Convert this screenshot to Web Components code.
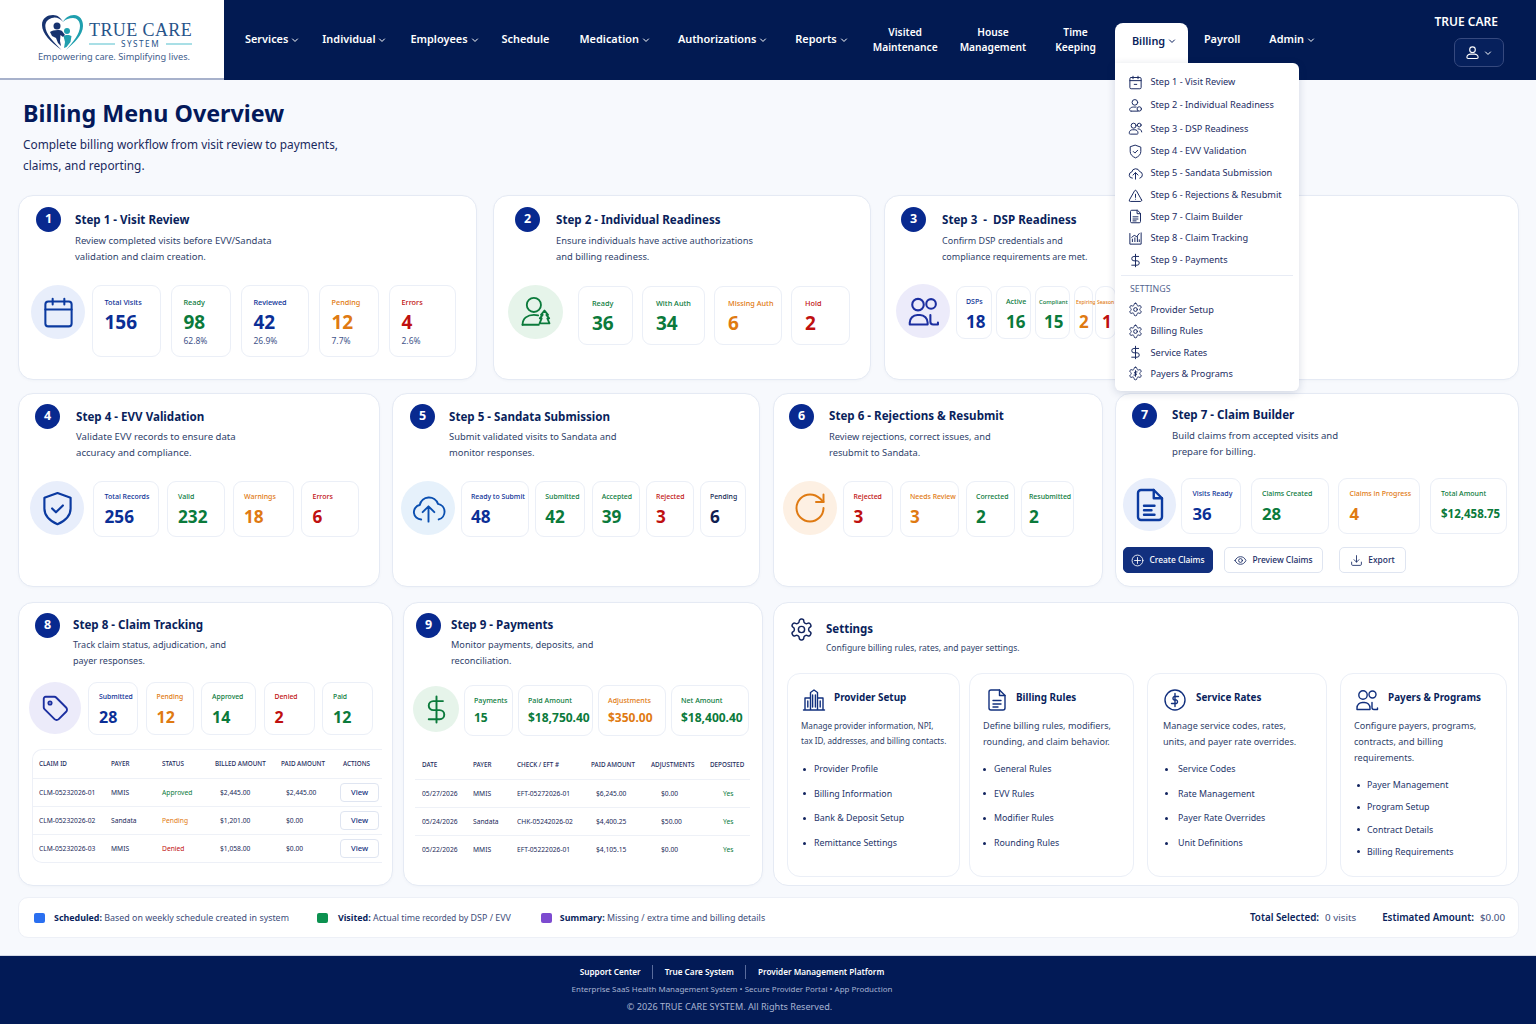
<!DOCTYPE html>
<html lang="en">
<head>
<meta charset="utf-8">
<title>Billing Menu Overview</title>
<style>
  html, body { margin: 0; padding: 0; }
  body { width: 1536px; height: 1024px; overflow: hidden; background: #f7f9fd; font-family: "Noto Sans", "Open Sans", sans-serif; color: #0a1f5c; }
</style>
</head>
<body>
<tc-header></tc-header>
<tc-main>
  <tc-page-title heading="Billing Menu Overview" text="Complete billing workflow from visit review to payments, claims, and reporting."></tc-page-title>

  <tc-row style="margin-top:19px;height:185px">
    <tc-step-card num="1" heading="Step 1 - Visit Review" desc="Review completed visits before EVV/Sandata|validation and claim creation." offset="18" title-gap="14" row-left="13" row-top="20" style="width:459px;--desc-size:9.5px;--tile-pt:11px;--tile-pl:11.5px;--row-gap:10px;--tile-label:7.3px">
      <tc-circle icon="calendar" bg="#e8eefb" color="#0b3aa0" d="54" size="35" sw="1.4" style="margin-right:-3px"></tc-circle>
      <tc-stat label="Total Visits" value="156" tone="blue" w="69" h="72"></tc-stat>
      <tc-stat label="Ready" value="98" sub="62.8%" tone="green" w="60" h="72"></tc-stat>
      <tc-stat label="Reviewed" value="42" sub="26.9%" tone="blue" w="68" h="72"></tc-stat>
      <tc-stat label="Pending" value="12" sub="7.7%" tone="orange" w="60" h="72"></tc-stat>
      <tc-stat label="Errors" value="4" sub="2.6%" tone="red" w="67" h="72"></tc-stat>
    </tc-step-card>
    <tc-step-card num="2" heading="Step 2 - Individual Readiness" desc="Ensure individuals have active authorizations|and billing readiness." offset="22" title-gap="16" row-left="15" row-top="20" style="width:378px;margin-left:16px;--desc-size:9.35px;--tile-pt:11px;--tile-pl:13px;--row-gap:9px;--tile-label:7.3px">
      <tc-circle icon="user-tree" bg="#e6f4ea" color="#0b7a3b" d="55" size="34" sw="1.3" style="margin-right:6px;height:54px"></tc-circle>
      <tc-stat label="Ready" value="36" tone="green" w="55" h="59" style="margin-top:1px"></tc-stat>
      <tc-stat label="With Auth" value="34" tone="green" w="63" h="59" style="margin-top:1px"></tc-stat>
      <tc-stat label="Missing Auth" value="6" tone="orange" w="68" h="59" style="margin-top:1px"></tc-stat>
      <tc-stat label="Hold" value="2" tone="red" w="59" h="59" style="margin-top:1px"></tc-stat>
    </tc-step-card>
    <tc-step-card num="3" heading="Step 3 &nbsp;- &nbsp;DSP Readiness" desc="Confirm DSP credentials and|compliance requirements are met." offset="17" title-gap="16" row-left="12" row-top="19" style="width:635px;margin-left:13px;--desc-size:9px;--tile-pt:10px;--tile-pl:9px;--row-gap:4px;--tile-label:7px;--tile-val:17px">
      <tc-circle icon="users-hook" bg="#ecebfa" color="#1c2fa0" d="54" size="33" sw="1.5" style="margin-right:2px"></tc-circle>
      <tc-stat label="DSPs" value="18" tone="blue" w="36" h="53" style="margin-top:2px"></tc-stat>
      <tc-stat label="Active" value="16" tone="green" w="35" h="53" style="margin-top:2px"></tc-stat>
      <tc-stat label="Compliant" value="15" tone="green" w="35" h="53" style="margin-top:2px;--tile-label:5.8px;--tile-pl:3px;--val-pl:5px"></tc-stat>
      <tc-stat label="Expiring" value="2" tone="orange" w="19" h="53" style="margin-top:2px;--tile-label:5px;--tile-pl:1px;--val-pl:3px"></tc-stat>
      <tc-stat label="Season" value="1" tone="red" label-tone="orange" w="21" h="53" style="margin-top:2px;margin-left:-2px;--tile-label:5px;--tile-pl:1px;--val-pl:5px"></tc-stat>
    </tc-step-card>
  </tc-row>

  <tc-row style="margin-top:13px;height:194px">
    <tc-step-card num="4" heading="Step 4 - EVV Validation" desc="Validate EVV records to ensure data|accuracy and compliance." offset="17" title-gap="16" row-left="12" row-top="19" head-top="10" style="width:362px;--h-mb:4px;--desc-size:9.6px;--tile-pt:10px;--tile-pl:10.5px;--row-gap:7.5px;--tile-label:7px;--tile-val:17.2px">
      <tc-circle icon="shield-check" bg="#e8eefb" color="#0b3aa0" d="54" size="37" sw="1.4" style="margin-right:1.5px"></tc-circle>
      <tc-stat label="Total Records" value="256" tone="blue" w="66" h="56"></tc-stat>
      <tc-stat label="Valid" value="232" tone="green" w="58.5" h="56"></tc-stat>
      <tc-stat label="Warnings" value="18" tone="orange" w="61" h="56"></tc-stat>
      <tc-stat label="Errors" value="6" tone="red" w="57.5" h="56"></tc-stat>
    </tc-step-card>
    <tc-step-card num="5" heading="Step 5 - Sandata Submission" desc="Submit validated visits to Sandata and|monitor responses." offset="18" title-gap="14" row-left="9" row-top="19" head-top="10" style="width:368px;margin-left:12px;--h-mb:4px;--desc-size:9.4px;--tile-pt:10px;--tile-pl:9px;--row-gap:6.4px;--tile-label:6.9px;--tile-val:17.2px">
      <tc-circle icon="cloud-up" bg="#e6f1fb" color="#0b4fb0" d="54" size="35" sw="1.3" style="margin-right:-.5px"></tc-circle>
      <tc-stat label="Ready to Submit" value="48" tone="blue" w="68" h="56"></tc-stat>
      <tc-stat label="Submitted" value="42" tone="green" w="50" h="56"></tc-stat>
      <tc-stat label="Accepted" value="39" tone="green" w="48" h="56"></tc-stat>
      <tc-stat label="Rejected" value="3" tone="red" w="47.5" h="56"></tc-stat>
      <tc-stat label="Pending" value="6" tone="navy" w="46.5" h="56"></tc-stat>
    </tc-step-card>
    <tc-step-card num="6" heading="Step 6 - Rejections &amp; Resubmit" desc="Review rejections, correct issues, and|resubmit to Sandata." offset="16" title-gap="15" row-left="10" row-top="19" head-top="10" style="width:330px;margin-left:13px;--h-pt:4px;--desc-size:9.3px;--tile-pt:10px;--tile-pl:9.5px;--row-gap:6.5px;--tile-label:6.9px;--tile-val:17.2px">
      <tc-circle icon="rotate" bg="#fdf0e3" color="#df7a12" d="54" size="36" sw="1.3" style="margin-right:-.5px"></tc-circle>
      <tc-stat label="Rejected" value="3" tone="red" w="50" h="56"></tc-stat>
      <tc-stat label="Needs Review" value="3" tone="orange" w="59.5" h="56"></tc-stat>
      <tc-stat label="Corrected" value="2" tone="green" w="49" h="56"></tc-stat>
      <tc-stat label="Resubmitted" value="2" tone="green" w="52.5" h="56" style="--tile-pl:7px"></tc-stat>
    </tc-step-card>
    <tc-step-card num="7" heading="Step 7 - Claim Builder" desc="Build claims from accepted visits and|prepare for billing." offset="17" title-gap="15" row-left="8" row-top="17" head-top="9" style="width:404px;margin-left:12px;--h-pt:4px;--desc-size:9.6px;--tile-pt:10px;--tile-pl:10.5px;--row-gap:9.5px;--tile-label:7px;--tile-val:16.8px">
      <tc-circle icon="file-doc" bg="#e8eefb" color="#0b3aa0" d="53" size="36" sw="1.6" style="margin-right:-4.5px"></tc-circle>
      <tc-stat label="Visits Ready" value="36" tone="blue" w="60" h="56"></tc-stat>
      <tc-stat label="Claims Created" value="28" tone="green" w="78" h="56"></tc-stat>
      <tc-stat label="Claims in Progress" value="4" tone="orange" w="82" h="56"></tc-stat>
      <tc-stat label="Total Amount" value="$12,458.75" tone="green" label-tone="green" w="77" h="56" style="--tile-val:11.5px"></tc-stat>
      <tc-actions slot="below"></tc-actions>
    </tc-step-card>
  </tc-row>

  <tc-row style="margin-top:15px;height:284px">
    <tc-step-card num="8" heading="Step 8 - Claim Tracking" desc="Track claim status, adjudication, and|payer responses." offset="17" title-gap="13" row-left="11" row-top="11" head-top="10" style="width:375px;--h-pt:4px;--h-mb:4px;--desc-size:9px;--tile-pt:9px;--tile-pl:10px;--row-gap:7.5px;--tile-label:6.8px;--tile-val:16px">
      <tc-circle icon="tag" bg="#ecebfa" color="#1c2fa0" d="52" size="30" sw="1.5" style="margin-right:-.5px"></tc-circle>
      <tc-stat label="Submitted" value="28" tone="blue" w="50" h="53"></tc-stat>
      <tc-stat label="Pending" value="12" tone="orange" w="48" h="53"></tc-stat>
      <tc-stat label="Approved" value="14" tone="green" w="55" h="53"></tc-stat>
      <tc-stat label="Denied" value="2" tone="red" w="51" h="53"></tc-stat>
      <tc-stat label="Paid" value="12" tone="green" w="51" h="53"></tc-stat>
      <tc-table slot="below" kind="claims"></tc-table>
    </tc-step-card>
    <tc-step-card num="9" heading="Step 9 - Payments" desc="Monitor payments, deposits, and|reconciliation." offset="13" title-gap="10" row-left="10" row-top="14" head-top="10" style="width:360px;margin-left:10px;--h-pt:4px;--h-mb:4px;--tile-pt:9px;--tile-pl:9px;--row-gap:5px;--tile-label:7.1px;--tile-val:12px;--val-mt:1px">
      <tc-circle icon="dollar" bg="#e6f4ea" color="#0b7a3b" d="46" size="31" sw="1.5" style="margin:1px 0 0"></tc-circle>
      <tc-stat label="Payments" value="15" tone="green" w="49" h="51"></tc-stat>
      <tc-stat label="Paid Amount" value="$18,750.40" tone="green" w="75" h="51"></tc-stat>
      <tc-stat label="Adjustments" value="$350.00" tone="orange" w="68" h="51"></tc-stat>
      <tc-stat label="Net Amount" value="$18,400.40" tone="green" w="78" h="51"></tc-stat>
      <tc-table slot="below" kind="payments"></tc-table>
    </tc-step-card>
    <tc-settings-panel style="width:746px;margin-left:10px">
      <tc-setting-card icon="building" heading="Provider Setup" icon-left="14" title-left="8" desc-left="13" desc-size="8.1" desc-lh="15" list-top="14" bullet-left="2" text-left="11" items="Provider Profile|Billing Information|Bank &amp; Deposit Setup|Remittance Settings" desc="Manage provider information, NPI,|tax ID, addresses, and billing contacts." style="width:173px"></tc-setting-card>
      <tc-setting-card icon="file-lines" heading="Billing Rules" icon-left="15" title-left="7" desc-left="13" items="General Rules|EVV Rules|Modifier Rules|Rounding Rules" desc="Define billing rules, modifiers,|rounding, and claim behavior." style="width:165px;margin-left:9px"></tc-setting-card>
      <tc-setting-card icon="circle-dollar" heading="Service Rates" icon-left="15" title-left="9" desc-left="15" bullet-left="2" text-left="13" items="Service Codes|Rate Management|Payer Rate Overrides|Unit Definitions" desc="Manage service codes, rates,|units, and payer rate overrides." style="width:180px;margin-left:13px"></tc-setting-card>
      <tc-setting-card icon="users-hook" heading="Payers &amp; Programs" icon-left="14" title-left="9" desc-left="13" bullet-left="3" text-left="10" item-gap="22.3" items="Payer Management|Program Setup|Contract Details|Billing Requirements" desc="Configure payers, programs,|contracts, and billing|requirements." style="width:167px;margin-left:13px"></tc-setting-card>
    </tc-settings-panel>
  </tc-row>

  <tc-legend></tc-legend>
</tc-main>
<tc-footer></tc-footer>

<script>
const GEAR = 'M12.22 2h-.44a2 2 0 0 0-2 2v.18a2 2 0 0 1-1 1.73l-.43.25a2 2 0 0 1-2 0l-.15-.08a2 2 0 0 0-2.73.73l-.22.38a2 2 0 0 0 .73 2.73l.15.1a2 2 0 0 1 1 1.72v.51a2 2 0 0 1-1 1.74l-.15.09a2 2 0 0 0-.73 2.73l.22.38a2 2 0 0 0 2.73.73l.15-.08a2 2 0 0 1 2 0l.43.25a2 2 0 0 1 1 1.73V20a2 2 0 0 0 2 2h.44a2 2 0 0 0 2-2v-.18a2 2 0 0 1 1-1.73l.43-.25a2 2 0 0 1 2 0l.15.08a2 2 0 0 0 2.73-.73l.22-.39a2 2 0 0 0-.73-2.73l-.15-.08a2 2 0 0 1-1-1.74v-.5a2 2 0 0 1 1-1.74l.15-.09a2 2 0 0 0 .73-2.73l-.22-.38a2 2 0 0 0-2.73-.73l-.15.08a2 2 0 0 1-2 0l-.43-.25a2 2 0 0 1-1-1.73V4a2 2 0 0 0-2-2z';

const ICONS = {
  'calendar': '<rect x="3" y="4.5" width="18" height="17" rx="2"/><path d="M16 2.5v4M8 2.5v4M3 10h18"/>',
  'calendar-dash': '<rect x="3" y="4" width="18" height="18" rx="2"/><path d="M16 2v4M8 2v4M3 9h18M10 15h4"/>',
  'user': '<circle cx="12" cy="7.5" r="4.5"/><path d="M5 21.5c-1.2 0-2-.8-2-2 0-3 3-5 6-5h6c3 0 6 2 6 5 0 1.2-.8 2-2 2z"/>',
  'user-mini': '<circle cx="11" cy="7" r="4.5"/><path d="M5 21c-2.5 0-3-2-2-4 1-1.5 3-2.5 5.5-2.5H13"/><path d="M5 21h11"/><circle cx="18" cy="17.5" r="3.5"/>',
  'users': '<circle cx="9" cy="7.5" r="4"/><circle cx="18" cy="6.5" r="3"/><path d="M3 21c-1 0-1-1-1-2 0-3 2.5-5 5-5h4c2.5 0 5 2 5 5 0 1 0 2-1 2z"/><path d="M16 12.5c3 0 6 2 6 5"/>',
  'users-hook': '<circle cx="8" cy="7" r="4.2"/><circle cx="17.5" cy="6.5" r="3.5"/><path d="M2 21.5V20a5.5 5.5 0 0 1 5.5-5.5h2A5.5 5.5 0 0 1 15 20v1.5z"/><path d="M17 14.500v5a2 2 0 0 0 2 2h3.500V20"/>',
  'user-tree': '<circle cx="10.5" cy="7" r="5"/><path d="M2.5 21c0-4.500 3.500-7 8-7 1 0 2 .1 3 .4"/><path d="M2.5 21H14"/><path d="M18 11l2.500 3h-1.200l2 2.500H20l1.500 3.500h-7l1.500-3.500h-1.300l2-2.500h-1.200z"/>',
  'shield-check': '<path d="M12 2l8.500 3v7c0 5-3.500 8-8.500 10.200C7 20 3.500 17 3.500 12V5z"/><path d="M8.500 12l2.500 2.500 4.500-4.500"/>',
  'cloud-up': '<path d="M7 19.500a5 5 0 0 1-1-9.900 6.500 6.500 0 0 1 12.500-.8 5.500 5.500 0 0 1 .5 10.700"/><path d="M12 21V11M8 14.500l4-4 4 4"/>',
  'triangle': '<path d="M21.700 19L13.500 4.500a1.700 1.700 0 0 0-3 0L2.300 19a1.700 1.700 0 0 0 1.500 2.500h16.400a1.700 1.700 0 0 0 1.500-2.500z"/><path d="M12 10v5M12 18h.01"/>',
  'file-lines': '<path d="M14.500 2H6a2 2 0 0 0-2 2v16a2 2 0 0 0 2 2h12a2 2 0 0 0 2-2V7.500z"/><path d="M14.500 2v5.500H20M8 12.500h8M8 16h8M8 19h5"/>',
  'file-doc': '<path d="M14.500 2H6a2 2 0 0 0-2 2v16a2 2 0 0 0 2 2h12a2 2 0 0 0 2-2V7.500z"/><path d="M14.500 2v5.500H20M8 12.500h7M8 15.500h5M8 18.500h7"/>',
  'chart': '<path d="M3 4v17h18V3"/><path d="M7 17v-4M11 17v-6M15 17V9M18 17v-3M6 10l4-3 4 2 4-5"/>',
  'dollar': '<path d="M12 2v20M17 5.500H9.500a3.500 3.500 0 0 0 0 7h5a3.500 3.500 0 0 1 0 7H6"/>',
  'circle-dollar': '<circle cx="12" cy="12" r="10"/><path d="M12 5.500v13M15.500 8.500H11a2 2 0 0 0 0 3.500h2.500a2 2 0 0 1 0 3.500h-5"/>',
  'gear': `<path d="${GEAR}"/><circle cx="12" cy="12" r="3"/>`,
  'gear-dollar': `<path d="${GEAR}"/><path d="M12 7.500v9M14.500 9.500h-3.200a1.300 1.300 0 0 0 0 2.500h1.400a1.300 1.300 0 0 1 0 2.500H9.500"/>`,
  'tag': '<path d="M3 4.500A1.500 1.500 0 0 1 4.500 3h7a2 2 0 0 1 1.400.6l8 8a2.400 2.400 0 0 1 0 3.400L15 20.900a2.400 2.400 0 0 1-3.400 0l-8-8A2 2 0 0 1 3 11.500z"/><circle cx="8" cy="8" r="1.300"/>',
  'rotate': '<path d="M21 12a9 9 0 1 1-9-9c2.500 0 4.900 1 6.700 2.700L21 8"/><path d="M21 3v5h-5"/>',
  'circle-plus': '<circle cx="12" cy="12" r="10"/><path d="M12 6.500v11M6.500 12h11"/>',
  'eye': '<path d="M2 12c2-4.500 5.500-7 10-7s8 2.500 10 7c-2 4.500-5.500 7-10 7s-8-2.500-10-7z"/><circle cx="12" cy="12" r="3.500"/>',
  'download': '<path d="M12 3v12M7.500 10.500L12 15l4.500-4.500M3 15v4a2 2 0 0 0 2 2h14a2 2 0 0 0 2-2v-4"/>',
  'building': '<path d="M1.500 22h21M3 22V10h5.500M21 22V10h-5.500M8.500 22V4.500L12 2l3.500 2.500V22"/><path d="M5.800 13v6M10.600 7v12M13.400 7v12M18.200 13v6"/>',
  'chevron': '<path d="M6 9.500l6 6 6-6"/>'
};

class TcIcon extends HTMLElement {
  constructor() {
    super();
    this.attachShadow({ mode: 'open' });
  }

  connectedCallback() {
    const size = this.getAttribute('size') || 14;
    const color = this.getAttribute('color') || 'currentColor';
    const sw = this.getAttribute('sw') || 1.6;
    this.shadowRoot.innerHTML = `
      <style>
        :host { display: inline-flex; flex: none; line-height: 0; }
      </style>
      <svg width="${size}" height="${size}" viewBox="0 0 24 24" fill="none" stroke="${color}" stroke-width="${sw}" stroke-linecap="round" stroke-linejoin="round">${ICONS[this.getAttribute('name')] || ''}</svg>
    `;
  }
}

class TcLogo extends HTMLElement {
  constructor() {
    super();
    this.attachShadow({ mode: 'open' });
  }

  connectedCallback() {
    this.shadowRoot.innerHTML = `
      <style>
        :host { display: block; width: 224px; height: 80px; flex: none; box-sizing: border-box; background: #fff; padding: 15px 0 0 38px; border-bottom: 2px solid #a7b1cb; }
        .top { display: flex; margin-left: 3px; height: 35px; }
        .names { margin-left: 6px; width: 103px; }
        .name { font: 400 18px/20px "Liberation Serif", serif; color: #27548a; letter-spacing: .4px; white-space: nowrap; margin-top: 5px; }
        .sys { display: flex; align-items: center; gap: 6px; font: 400 8.2px/10px "Noto Sans", sans-serif; letter-spacing: 1.5px; color: #27548a; margin-top: -1px; }
        .sys i { flex: 1; height: 1.5px; background: #a9dfe6; }
        .tag { font: 400 9.2px/12px "Noto Sans", sans-serif; color: #3f5d8c; margin-top: 1px; white-space: nowrap; }
      </style>
      <div class="top">
        <svg width="42" height="35" viewBox="0 0 42 35">
          <path fill="#17336f" d="M20.500 35C10 27 1 19 1 10 1 3 6.500 0 12 0c4.500 0 8 2.800 10 7-2.500-3-6-4.800-9.500-4.300C7.500 3.300 4.300 6.500 4.300 11c0 8 8.500 16 16.200 24z"/>
          <path fill="#1f9fae" d="M22 7c2-4 6-7 11-7 6 0 9 5 9 11 0 9-9 17-17 24 7-8 14-16 14-24 0-5-3-8-7-8s-7 1-10 4z"/>
          <circle cx="16" cy="11" r="3.500" fill="#17336f"/>
          <path fill="#17336f" d="M9 17c2-1.500 9-3 12-1l3 4-2 2-2.500-2-.5 6 1 5-3-3-2-5-4-2z"/>
          <circle cx="26" cy="16" r="3" fill="#1f9fae"/>
          <path fill="#1f9fae" d="M22.500 21c2-1.500 6-1.500 8 0l-1 6-4 5-2.500 1 1-6z"/>
        </svg>
        <div class="names">
          <div class="name">TRUE CARE</div>
          <div class="sys"><i></i>SYSTEM<i></i></div>
        </div>
      </div>
      <div class="tag">Empowering care. Simplifying lives.</div>
    `;
  }
}

class TcNavLink extends HTMLElement {
  constructor() {
    super();
    this.attachShadow({ mode: 'open' });
  }

  connectedCallback() {
    const parts = this.getAttribute('label').split('|');
    const chevron = this.hasAttribute('menu') ? '<tc-icon name="chevron" size="10" sw="2.4"></tc-icon>' : '';
    this.shadowRoot.innerHTML = `
      <style>
        :host { display: flex; align-items: center; gap: 2px; font: 600 ${parts.length > 1 ? 10.2 : 10.9}px/14.5px "Noto Sans", sans-serif; color: #fff; text-align: center; white-space: nowrap; }
      </style>
      <span>${parts.join('<br>')}</span>${chevron}
    `;
  }
}

class TcBillingMenu extends HTMLElement {
  constructor() {
    super();
    this.attachShadow({ mode: 'open' });
  }

  connectedCallback() {
    const steps = [
      ['calendar-dash', 'Step 1 - Visit Review', 23], ['user-mini', 'Step 2 - Individual Readiness', 23.5],
      ['users', 'Step 3 - DSP Readiness', 23], ['shield-check', 'Step 4 - EVV Validation', 22],
      ['cloud-up', 'Step 5 - Sandata Submission', 22], ['triangle', 'Step 6 - Rejections &amp; Resubmit', 22],
      ['file-lines', 'Step 7 - Claim Builder', 21.5], ['chart', 'Step 8 - Claim Tracking', 21.5], ['dollar', 'Step 9 - Payments', 22]
    ];
    const settings = [
      ['gear', 'Provider Setup'], ['gear', 'Billing Rules'], ['dollar', 'Service Rates'], ['gear-dollar', 'Payers &amp; Programs']
    ];
    const row = (icon, text, h) => `<div class="item" style="height:${h}px"><tc-icon name="${icon}" size="15" sw="1.6"></tc-icon><span>${text}</span></div>`;
    this.shadowRoot.innerHTML = `
      <style>
        :host { display: block; position: absolute; left: 0; top: 40px; width: 184px; height: 328px; box-sizing: border-box; background: #fff; border-radius: 0 6px 6px 6px; box-shadow: 0 2px 8px rgba(20, 40, 90, .16); padding-top: 7.5px; color: #1c2c63; z-index: 20; }
        .item { display: flex; align-items: center; gap: 7.5px; padding-left: 13px; font: 400 9.2px/12px "Noto Sans", sans-serif; white-space: nowrap; }
        hr { border: 0; height: 1px; background: #e8ecf5; margin: 4px 6px 7px; }
        .head { font: 400 8.8px/12px "Noto Sans", sans-serif; color: #55648f; padding-left: 15px; margin-bottom: 4.3px; }
      </style>
      ${steps.map(s => row(s[0], s[1], s[2])).join('')}
      <hr>
      <div class="head">SETTINGS</div>
      <div>${settings.map(s => row(s[0], s[1], 21.3)).join('')}</div>
    `;
  }
}

class TcHeader extends HTMLElement {
  constructor() {
    super();
    this.attachShadow({ mode: 'open' });
  }

  connectedCallback() {
    const links = [
      ['Services', 21, 1], ['Individual', 22, 1], ['Employees', 23, 1], ['Schedule', 22, 0], ['Medication', 30, 1],
      ['Authorizations', 27, 1], ['Reports', 27, 1], ['Visited|Maintenance', 24, 0], ['House|Management', 22, 0], ['Time|Keeping', 29, 0]
    ];
    const after = [['Payroll', 16, 0], ['Admin', 29, 1]];
    const render = l => `<tc-nav-link label="${l[0]}" ${l[2] ? 'menu' : ''} style="margin-left:${l[1]}px"></tc-nav-link>`;
    this.shadowRoot.innerHTML = `
      <style>
        :host { display: flex; position: relative; z-index: 10; height: 80px; background: #021a52; }
        nav { display: flex; align-items: center; height: 79px; }
        .tab { position: relative; align-self: flex-start; margin: 23px 0 0 19px; width: 73px; height: 40px; box-sizing: border-box; background: #fff; border-radius: 8px 8px 0 0; padding: 10px 0 0 17px; }
        .tab-label { display: flex; align-items: center; gap: 2px; font: 600 10.9px/15px "Noto Sans", sans-serif; color: #0a1f5c; }
        .account { margin-left: auto; display: flex; flex-direction: column; align-items: flex-end; padding-right: 32px; }
        .brand { font: 600 12px/16px "Noto Sans", sans-serif; color: #fff; margin: 14px 6px 0 0; white-space: nowrap; }
        .user { display: flex; align-items: center; justify-content: center; gap: 3px; width: 50px; height: 29px; box-sizing: border-box; margin-top: 8px; border: 1px solid #36497e; border-radius: 7px; background: #06205c; color: #fff; }
      </style>
      <tc-logo></tc-logo>
      <nav>
        ${links.map(render).join('')}
        <div class="tab">
          <div class="tab-label">Billing <tc-icon name="chevron" size="10" sw="2.4"></tc-icon></div>
          <tc-billing-menu></tc-billing-menu>
        </div>
        ${after.map(render).join('')}
      </nav>
      <div class="account">
        <div class="brand">TRUE CARE</div>
        <div class="user"><tc-icon name="user" size="15" sw="1.8"></tc-icon><tc-icon name="chevron" size="10" sw="2.4"></tc-icon></div>
      </div>
    `;
  }
}

class TcMain extends HTMLElement {
  constructor() {
    super();
    this.attachShadow({ mode: 'open' });
  }

  connectedCallback() {
    this.shadowRoot.innerHTML = `
      <style>
        :host { display: block; height: 876px; box-sizing: border-box; padding: 18px 17px 0 18px; background: #f7f9fd; }
      </style>
      <slot></slot>
    `;
  }
}

class TcPageTitle extends HTMLElement {
  constructor() {
    super();
    this.attachShadow({ mode: 'open' });
  }

  connectedCallback() {
    this.shadowRoot.innerHTML = `
      <style>
        :host { display: block; padding-left: 5px; }
        h1 { margin: 0; font: 700 23.3px/30px "Noto Sans", sans-serif; color: #04195a; }
        p { margin: 6px 0 0; width: 320px; font: 400 11.85px/21px "Noto Sans", sans-serif; color: #1a2a5e; }
      </style>
      <h1>${this.getAttribute('heading')}</h1>
      <p>${this.getAttribute('text')}</p>
    `;
  }
}

class TcRow extends HTMLElement {
  constructor() {
    super();
    this.attachShadow({ mode: 'open' });
  }

  connectedCallback() {
    this.shadowRoot.innerHTML = `
      <style>
        :host { display: flex; align-items: stretch; }
      </style>
      <slot></slot>
    `;
  }
}

class TcStepCard extends HTMLElement {
  constructor() {
    super();
    this.attachShadow({ mode: 'open' });
  }

  connectedCallback() {
    const offset = this.getAttribute('offset');
    const titleGap = this.getAttribute('title-gap');
    const rowLeft = this.getAttribute('row-left');
    const rowTop = this.getAttribute('row-top');
    const headTop = this.getAttribute('head-top') || 11;
    const lines = this.getAttribute('desc').split('|').map(l => `<div>${l}</div>`).join('');
    this.shadowRoot.innerHTML = `
      <style>
        :host { display: block; flex: none; box-sizing: border-box; background: #fff; border: 1px solid #e5eaf4; border-radius: 15px; box-shadow: 0 1px 3px rgba(30, 50, 100, .03); }
        .head { display: flex; padding: ${headTop}px 0 0 ${offset - 1}px; height: 58px; }
        .badge { width: 25px; height: 25px; flex: none; border-radius: 50%; background: #08298f; color: #fff; display: flex; align-items: center; justify-content: center; font: 700 12.5px/1 "Noto Sans", sans-serif; }
        .text { margin-left: ${titleGap}px; padding-top: var(--h-pt, 5px); }
        h3 { margin: 0 0 var(--h-mb, 5px); font: 700 11.6px/16px "Noto Sans", sans-serif; color: #0a1f5c; white-space: nowrap; }
        .desc { font: 400 var(--desc-size, 9.2px)/16px "Noto Sans", sans-serif; color: #2f3f6b; white-space: nowrap; }
        .row { display: flex; align-items: flex-start; gap: var(--row-gap, 8px); margin: ${rowTop}px 0 0 ${rowLeft - 1}px; }
      </style>
      <div class="head">
        <div class="badge">${this.getAttribute('num')}</div>
        <div class="text">
          <h3>${this.getAttribute('heading')}</h3>
          <div class="desc">${lines}</div>
        </div>
      </div>
      <div class="row"><slot></slot></div>
      <slot name="below"></slot>
    `;
  }
}

class TcCircle extends HTMLElement {
  constructor() {
    super();
    this.attachShadow({ mode: 'open' });
  }

  connectedCallback() {
    const d = this.getAttribute('d');
    this.shadowRoot.innerHTML = `
      <style>
        :host { display: flex; flex: none; align-items: center; justify-content: center; width: ${d}px; height: ${d}px; border-radius: 50%; background: ${this.getAttribute('bg')}; }
      </style>
      <tc-icon name="${this.getAttribute('icon')}" size="${this.getAttribute('size')}" color="${this.getAttribute('color')}" sw="${this.getAttribute('sw')}"></tc-icon>
    `;
  }
}

const TONES = { blue: '#0b2f96', green: '#0b7a3b', orange: '#df7a12', red: '#bf1010', navy: '#111f52' };

class TcStat extends HTMLElement {
  constructor() {
    super();
    this.attachShadow({ mode: 'open' });
  }

  connectedCallback() {
    const tone = TONES[this.getAttribute('tone')];
    const labelTone = TONES[this.getAttribute('label-tone')] || tone;
    const sub = this.getAttribute('sub');
    this.shadowRoot.innerHTML = `
      <style>
        :host { display: block; flex: none; box-sizing: border-box; width: ${this.getAttribute('w')}px; height: ${this.getAttribute('h')}px; padding: var(--tile-pt, 12px) 0 0 var(--tile-pl, 10px); background: #fff; border: 1px solid #ebeff7; border-radius: 9px; }
        .label { font: 500 var(--tile-label, 7.8px)/10px "Noto Sans", sans-serif; color: ${labelTone}; white-space: nowrap; }
        .value { font: 700 var(--tile-val, 19px)/24px "Noto Sans", sans-serif; color: ${tone}; margin-top: var(--val-mt, 3px); padding-left: var(--val-pl, 0); white-space: nowrap; }
        .sub { font: 400 8.5px/12px "Noto Sans", sans-serif; color: #43548a; margin-top: 1px; }
      </style>
      <div class="label">${this.getAttribute('label')}</div>
      <div class="value">${this.getAttribute('value')}</div>
      ${sub ? `<div class="sub">${sub}</div>` : ''}
    `;
  }
}

class TcActions extends HTMLElement {
  constructor() {
    super();
    this.attachShadow({ mode: 'open' });
  }

  connectedCallback() {
    this.shadowRoot.innerHTML = `
      <style>
        :host { display: flex; margin: 13px 0 0 7px; }
        .btn { display: flex; align-items: center; justify-content: center; gap: 5px; box-sizing: border-box; height: 26px; border: 1px solid #dfe5f1; border-radius: 5px; background: #fff; color: #1a2c66; font: 500 8.4px/1 "Noto Sans", sans-serif; white-space: nowrap; }
        .primary { background: #12307e; border-color: #12307e; color: #fff; }
      </style>
      <div class="btn primary" style="width:90px"><tc-icon name="circle-plus" size="13" sw="1.6"></tc-icon>Create Claims</div>
      <div class="btn" style="width:99px;margin-left:11px"><tc-icon name="eye" size="13" sw="1.6"></tc-icon>Preview Claims</div>
      <div class="btn" style="width:67px;margin-left:16px"><tc-icon name="download" size="13" sw="1.6"></tc-icon>Export</div>
    `;
  }
}

const TABLES = {
  claims: {
    columns: '72px 51px 53px 66px 62px 39px',
    margin: '14px 0 0 13px',
    head: ['CLAIM ID', 'PAYER', 'STATUS', 'BILLED AMOUNT', 'PAID AMOUNT', 'ACTIONS'],
    pad: [0, 0, 0, 5, 5, 0],
    rows: [
      ['CLM-05232026-01', 'MMIS', ['Approved', 'green'], '$2,445.00', '$2,445.00', 'VIEW'],
      ['CLM-05232026-02', 'Sandata', ['Pending', 'orange'], '$1,201.00', '$0.00', 'VIEW'],
      ['CLM-05232026-03', 'MMIS', ['Denied', 'red'], '$1,058.00', '$0.00', 'VIEW']
    ]
  },
  payments: {
    columns: '51px 44px 74px 60px 59px 40px',
    margin: '15px 0 0 11px',
    plain: true,
    head: ['DATE', 'PAYER', 'CHECK / EFT #', 'PAID AMOUNT', 'ADJUSTMENTS', 'DEPOSITED'],
    pad: [0, 0, 0, 5, 10, 13],
    rows: [
      ['05/27/2026', 'MMIS', 'EFT-05272026-01', '$6,245.00', '$0.00', ['Yes', 'green']],
      ['05/24/2026', 'Sandata', 'CHK-05242026-02', '$4,400.25', '$50.00', ['Yes', 'green']],
      ['05/22/2026', 'MMIS', 'EFT-05222026-01', '$4,105.15', '$0.00', ['Yes', 'green']]
    ]
  }
};

class TcTable extends HTMLElement {
  constructor() {
    super();
    this.attachShadow({ mode: 'open' });
  }

  cell(value, pad) {
    if (value === 'VIEW') return '<div class="cell"><span class="view">View</span></div>';
    const text = Array.isArray(value) ? value[0] : value;
    const color = Array.isArray(value) ? `color:${TONES[value[1]]};` : '';
    return `<div class="cell" style="${color}padding-left:${pad}px">${text}</div>`;
  }

  connectedCallback() {
    const t = TABLES[this.getAttribute('kind')];
    this.shadowRoot.innerHTML = `
      <style>
        :host { display: block; margin: ${t.margin}; width: ${t.plain ? 335 : 350}px; box-sizing: border-box; background: #fff; ${t.plain ? '' : 'border: 1px solid #edf0f7; border-right: 0; border-radius: 10px 0 0 10px;'} }
        .tr { display: grid; grid-template-columns: ${t.columns}; align-items: center; box-sizing: border-box; height: 28.1px; border-top: 1px solid #eef1f7; padding-left: ${t.plain ? 7 : 6}px; }
        .tr.h { height: 28px; border-top: 0; }
        .h .cell { font-size: 6.3px; color: #1e2c5e; font-weight: 500; }
        .cell { font: 400 6.7px/10px "Noto Sans", sans-serif; color: #1a2858; white-space: nowrap; }
        .view { display: block; width: 39px; height: 19px; box-sizing: border-box; margin-left: -3px; border: 1px solid #dfe5f1; border-radius: 4px; text-align: center; font: 500 7.6px/17px "Noto Sans", sans-serif; color: #12307e; background: #fff; }
      </style>
      <div class="tr h">${t.head.map(h => `<div class="cell">${h}</div>`).join('')}</div>
      ${t.rows.map(r => `<div class="tr">${r.map((c, i) => this.cell(c, t.pad[i])).join('')}</div>`).join('')}
    `;
  }
}

class TcSettingsPanel extends HTMLElement {
  constructor() {
    super();
    this.attachShadow({ mode: 'open' });
  }

  connectedCallback() {
    this.shadowRoot.innerHTML = `
      <style>
        :host { display: block; flex: none; box-sizing: border-box; background: #fff; border: 1px solid #e5eaf4; border-radius: 15px; padding: 14px 0 0 13px; }
        .head { display: grid; grid-template-columns: 25px auto; align-content: start; column-gap: 12px; margin-left: 2px; height: 56px; }
        .gear { grid-row: 1 / 3; }
        h3 { margin: 0; font: 700 11.5px/24px "Noto Sans", sans-serif; color: #0a1f5c; }
        p { margin: 0; font: 400 8.5px/14px "Noto Sans", sans-serif; color: #2f3f6b; }
        .cards { display: flex; }
      </style>
      <div class="head">
        <tc-icon class="gear" name="gear" size="25" color="#12245f" sw="1.4"></tc-icon>
        <h3>Settings</h3>
        <p>Configure billing rules, rates, and payer settings.</p>
      </div>
      <div class="cards"><slot></slot></div>
    `;
  }
}

class TcSettingCard extends HTMLElement {
  constructor() {
    super();
    this.attachShadow({ mode: 'open' });
  }

  connectedCallback() {
    const get = (name, fallback) => this.getAttribute(name) || fallback;
    const desc = get('desc').split('|').map(l => `<div>${l}</div>`).join('');
    const items = get('items').split('|').map(l => `<li>${l}</li>`).join('');
    this.shadowRoot.innerHTML = `
      <style>
        :host { display: block; flex: none; box-sizing: border-box; height: 204px; background: #fff; border: 1px solid #ebeff7; border-radius: 13px; padding-top: 14px; }
        .top { display: flex; align-items: flex-start; padding-left: ${get('icon-left')}px; height: 30px; }
        h4 { margin: 1px 0 0 ${get('title-left')}px; font: 700 9.9px/16px "Noto Sans", sans-serif; color: #0a1f5c; white-space: nowrap; }
        .desc { padding-left: ${get('desc-left')}px; font: 400 ${get('desc-size', '9.1')}px/${get('desc-lh', '16')}px "Noto Sans", sans-serif; color: #2f3f6b; white-space: nowrap; }
        ul { list-style: none; margin: ${get('list-top', '12')}px 0 0; padding: 0 0 0 ${Number(get('desc-left')) + Number(get('bullet-left', 0))}px; }
        li { position: relative; padding-left: ${get('text-left', 11)}px; height: ${get('item-gap', '24.7')}px; font: 400 8.85px/14px "Noto Sans", sans-serif; color: #25356a; white-space: nowrap; }
        li::before { content: ""; position: absolute; left: 0; top: 5.5px; width: 3px; height: 3px; border-radius: 50%; background: #12245f; }
      </style>
      <div class="top"><tc-icon name="${get('icon')}" size="24" color="#12307e" sw="1.4"></tc-icon><h4>${get('heading')}</h4></div>
      <div class="desc">${desc}</div>
      <ul>${items}</ul>
    `;
  }
}

class TcLegend extends HTMLElement {
  constructor() {
    super();
    this.attachShadow({ mode: 'open' });
  }

  connectedCallback() {
    this.shadowRoot.innerHTML = `
      <style>
        :host { display: flex; align-items: center; margin-top: 11px; height: 41px; box-sizing: border-box; background: #fff; border: 1px solid #edf0f7; border-radius: 10px; padding: 1px 13px 0 15px; font: 400 8.9px/12px "Noto Sans", sans-serif; color: #3d4d7a; white-space: nowrap; }
        i { width: 11px; height: 10px; border-radius: 2px; margin-right: 9px; flex: none; }
        b { font-weight: 700; color: #0a1f5c; }
        small { font-size: 8px; }
        .right { margin-left: auto; display: flex; font-size: 9.8px; }
        .right b { font-weight: 600; margin-right: 6px; }
      </style>
      <i style="background:#2a6ff0"></i><span style="margin-right:28px"><b>Scheduled:</b> Based on weekly schedule created in system</span>
      <i style="background:#0c9150;margin-right:10px"></i><span style="margin-right:30px"><b>Visited:</b> Actual time <small>recorded</small> by DSP / EVV</span>
      <i style="background:#7d4bd0;margin-right:8px"></i><span><b>Summary:</b> Missing / extra time and billing details</span>
      <div class="right">
        <b>Total Selected:</b><span style="margin-right:26px">0 visits</span>
        <b>Estimated Amount:</b><span>$0.00</span>
      </div>
    `;
  }
}

class TcFooter extends HTMLElement {
  constructor() {
    super();
    this.attachShadow({ mode: 'open' });
  }

  connectedCallback() {
    this.shadowRoot.innerHTML = `
      <style>
        :host { display: block; height: 68px; box-sizing: border-box; background: #021a56; box-shadow: 0 -1px 0 #d5dae6; padding: 9px 72px 0 0; text-align: center; font-family: "Noto Sans", sans-serif; }
        .links { display: flex; justify-content: center; font: 600 8.2px/14px "Noto Sans", sans-serif; color: #fff; }
        .links span + span { border-left: 1px solid #5a6c9c; margin-left: 11.5px; padding-left: 11.5px; }
        .meta { font: 400 7.95px/14px "Noto Sans", sans-serif; color: #a8b4d2; margin-top: 3px; }
        .copy { font: 400 9.15px/14px "Noto Sans", sans-serif; color: #a8b4d2; margin-top: 4px; padding-right: 5px; }
      </style>
      <div class="links"><span>Support Center</span><span>True Care System</span><span>Provider Management Platform</span></div>
      <div class="meta">Enterprise SaaS Health Management System • Secure Provider Portal • App Production</div>
      <div class="copy">© 2026 TRUE CARE SYSTEM. All Rights Reserved.</div>
    `;
  }
}

customElements.define('tc-icon', TcIcon);
customElements.define('tc-logo', TcLogo);
customElements.define('tc-nav-link', TcNavLink);
customElements.define('tc-billing-menu', TcBillingMenu);
customElements.define('tc-header', TcHeader);
customElements.define('tc-main', TcMain);
customElements.define('tc-page-title', TcPageTitle);
customElements.define('tc-row', TcRow);
customElements.define('tc-step-card', TcStepCard);
customElements.define('tc-circle', TcCircle);
customElements.define('tc-stat', TcStat);
customElements.define('tc-actions', TcActions);
customElements.define('tc-table', TcTable);
customElements.define('tc-settings-panel', TcSettingsPanel);
customElements.define('tc-setting-card', TcSettingCard);
customElements.define('tc-legend', TcLegend);
customElements.define('tc-footer', TcFooter);
</script>
</body>
</html>
